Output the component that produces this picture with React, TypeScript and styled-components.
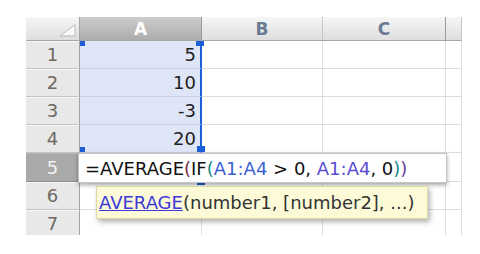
import { Fragment } from "react";
import styled, { createGlobalStyle } from "styled-components";

const GlobalStyle = createGlobalStyle`
  html, body {
    margin: 0;
    padding: 0;
    background: #fff;
  }
  body {
    font-family: "DejaVu Sans", "Liberation Sans", sans-serif;
  }
`;

const Page = styled.div`
  width: 480px;
  height: 254px;
  padding: 17px 0 0 26px;
  box-sizing: border-box;
  background: #fff;
`;

const Sheet = styled.div`
  position: relative;
  width: 436px;
  height: 218px;
`;

const Clip = styled.div`
  width: 436px;
  height: 218px;
  overflow: hidden;
`;

const Grid = styled.div`
  display: grid;
  grid-template-columns: 54px 122px 121px 123px 16px;
  grid-template-rows: 24px 28px 28px 28px 28px 29px 28px 28px;
`;

const Corner = styled.div`
  box-sizing: border-box;
  background: linear-gradient(#f6f6f6, #dedede);
  border-right: 1px solid #a4a4a4;
  border-bottom: 1px solid #a6a6a6;
  display: flex;
  align-items: flex-end;
  justify-content: flex-end;
  padding: 0 3px 3px 0;
`;

const ColHead = styled.div<{ $active?: boolean; $dark?: boolean }>`
  box-sizing: border-box;
  display: flex;
  align-items: center;
  justify-content: center;
  font-size: 17px;
  font-weight: bold;
  background: ${(p) =>
    p.$active
      ? "linear-gradient(#cdcdcd, #acacac)"
      : "linear-gradient(#f6f6f6, #dedede)"};
  color: ${(p) => (p.$active ? "#fff" : "#6b7b92")};
  border-bottom: 1px solid #a6a6a6;
  border-right: 1px solid ${(p) => (p.$dark ? "#9a9a9a" : "#c6c6c6")};
`;

const RowHead = styled.div<{ $active?: boolean }>`
  box-sizing: border-box;
  display: flex;
  align-items: center;
  justify-content: center;
  font-size: 18px;
  background: ${(p) => (p.$active ? "#a9a9a9" : "#e8e8e8")};
  color: ${(p) => (p.$active ? "#f2f2f2" : "#6e6862")};
  border-right: 1px solid #a4a4a4;
  border-bottom: 1px solid ${(p) => (p.$active ? "#8e8e8e" : "#c2c2c2")};
  box-shadow: inset 0 1px 0 ${(p) => (p.$active ? "#b4b4b4" : "#f7f7f7")};
`;

const Cell = styled.div<{ $selected?: boolean; $edge?: boolean }>`
  box-sizing: border-box;
  display: flex;
  align-items: center;
  justify-content: flex-end;
  padding-right: ${(p) => (p.$edge ? "4px" : "6px")};
  font-size: 18px;
  color: #1e1e1e;
  background: ${(p) => (p.$selected ? "#dde5f7" : "#fff")};
  border-bottom: 1px solid ${(p) => (p.$selected ? "#c9d0de" : "#dcdcdc")};
  border-right: ${(p) => (p.$edge ? "2px solid #1d5ed9" : "1px solid #dfdfdf")};
`;

const Handle = styled.div<{ $x: number; $y: number; $w: number; $h: number }>`
  position: absolute;
  left: ${(p) => p.$x}px;
  top: ${(p) => p.$y}px;
  width: ${(p) => p.$w}px;
  height: ${(p) => p.$h}px;
  background: #1d5ed9;
`;

const Editor = styled.div`
  position: absolute;
  left: 52px;
  top: 136px;
  width: 369px;
  height: 30px;
  box-sizing: border-box;
  background: #fff;
  border: 1px solid #c4c4c4;
  box-shadow: 0 2px 4px rgba(0, 0, 0, 0.35);
  display: flex;
  align-items: center;
  padding-left: 6px;
  font-size: 18px;
  color: #111;
  white-space: pre;
`;

const Tok = styled.span<{ $c: string }>`
  color: ${(p) => p.$c};
`;

const Tip = styled.div`
  position: absolute;
  left: 70px;
  top: 169px;
  width: 332px;
  height: 33px;
  box-sizing: border-box;
  background: #fdfbd7;
  border: 1px solid #dcd9a8;
  box-shadow: 2px 3px 5px rgba(0, 0, 0, 0.3);
  display: flex;
  align-items: center;
  padding-left: 2px;
  font-size: 18px;
  color: #333;
  white-space: pre;
`;

const FnLink = styled.span`
  color: #3d39d8;
  text-decoration: underline;
`;

const values = ["5", "10", "-3", "20", "", "", ""];

export default function App() {
  return (
    <>
      <GlobalStyle />
      <Page>
        <Sheet>
          <Clip>
            <Grid>
              <Corner>
                <svg width="17" height="13" viewBox="0 0 17 13">
                  <path d="M16 0.5 L16 12 L1 12 Z" fill="#fafafa" stroke="#b8b8b8" strokeWidth="1" />
                </svg>
              </Corner>
              <ColHead $active $dark>A</ColHead>
              <ColHead>B</ColHead>
              <ColHead $dark>C</ColHead>
              <ColHead />
              {values.map((v, i) => (
                <Fragment key={i}>
                  <RowHead $active={i === 4}>{i + 1}</RowHead>
                  <Cell $selected={i < 4} $edge={i < 4}>
                    {v}
                  </Cell>
                  <Cell />
                  <Cell />
                  <Cell />
                </Fragment>
              ))}
            </Grid>
          </Clip>
          {/* selection handles of A1:A4 */}
          <Handle $x={54} $y={24} $w={5} $h={5} />
          <Handle $x={170} $y={24} $w={8} $h={5} />
          <Handle $x={54} $y={130} $w={5} $h={5} />
          <Handle $x={171} $y={129} $w={8} $h={6} />
          <Handle $x={171} $y={164} $w={8} $h={4} />
          <Editor>
            =AVERAGE<Tok $c="#7a2a4a">(</Tok>IF<Tok $c="#168a8a">(</Tok>
            <Tok $c="#3b5fd0">A1:A4</Tok> &gt; 0, <Tok $c="#5a4ccf">A1:A4</Tok>, 0
            <Tok $c="#168a8a">)</Tok>
            <Tok $c="#6a3a9a">)</Tok>
          </Editor>
          <Tip>
            <FnLink>AVERAGE</FnLink>(number1, [number2], ...)
          </Tip>
        </Sheet>
      </Page>
    </>
  );
}
